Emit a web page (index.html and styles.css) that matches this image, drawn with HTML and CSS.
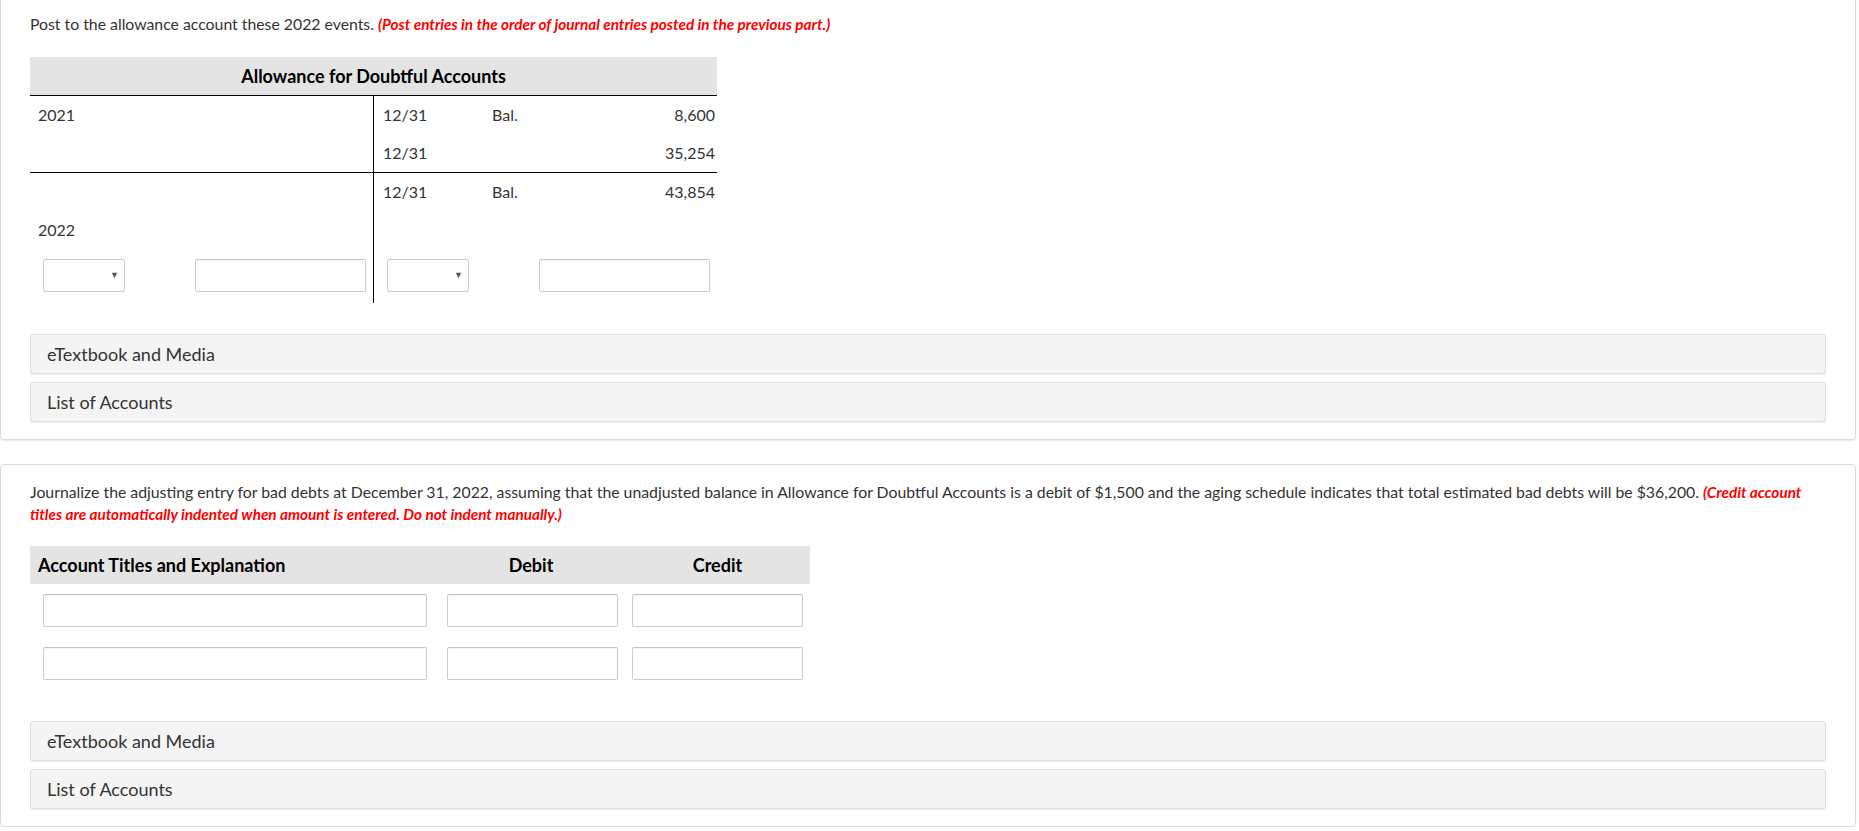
FILE: index.html
```html
<!DOCTYPE html>
<html lang="en">
<head>
    <meta charset="UTF-8">
    <meta name="viewport" content="width=device-width, initial-scale=1.0">
    <title>Allowance for Doubtful Accounts</title>
    <link rel="stylesheet" href="styles.css">
</head>
<body>
    <div class="card card-first">
        <p class="prompt">Post to the allowance account these 2022 events. <em class="note">(Post entries in the order of journal entries posted in the previous part.)</em></p>

        <table class="t-account">
            <colgroup>
                <col class="c-ldate">
                <col class="c-lamt">
                <col class="c-rdate">
                <col class="c-rexpl">
                <col class="c-ramt">
            </colgroup>
            <thead>
                <tr><th colspan="5">Allowance for Doubtful Accounts</th></tr>
            </thead>
            <tbody>
                <tr>
                    <td class="ldate">2021</td>
                    <td></td>
                    <td class="rdate">12/31</td>
                    <td class="expl">Bal.</td>
                    <td class="amt">8,600</td>
                </tr>
                <tr class="ruled">
                    <td class="ldate"></td>
                    <td></td>
                    <td class="rdate">12/31</td>
                    <td class="expl"></td>
                    <td class="amt">35,254</td>
                </tr>
                <tr>
                    <td class="ldate"></td>
                    <td></td>
                    <td class="rdate">12/31</td>
                    <td class="expl">Bal.</td>
                    <td class="amt">43,854</td>
                </tr>
                <tr>
                    <td class="ldate">2022</td>
                    <td></td>
                    <td class="rdate"></td>
                    <td class="expl"></td>
                    <td class="amt"></td>
                </tr>
                <tr class="entry">
                    <td class="ldate"><span class="select"><select><option></option></select></span></td>
                    <td class="lamt"><input type="text" class="field field-amt"></td>
                    <td class="rdate"><span class="select"><select><option></option></select></span></td>
                    <td class="expl"></td>
                    <td class="ramt"><input type="text" class="field field-amt"></td>
                </tr>
            </tbody>
        </table>

        <div class="links">
            <div class="link-bar">eTextbook and Media</div>
            <div class="link-bar">List of Accounts</div>
        </div>
    </div>

    <div class="card">
        <p class="prompt">Journalize the adjusting entry for bad debts at December 31, 2022, assuming that the unadjusted balance in Allowance for Doubtful Accounts is a debit of $1,500 and the aging schedule indicates that total estimated bad debts will be $36,200. <em class="note">(Credit account titles are automatically indented when amount is entered. Do not indent manually.)</em></p>

        <table class="journal">
            <colgroup>
                <col class="c-acct">
                <col class="c-debit">
                <col class="c-credit">
            </colgroup>
            <thead>
                <tr>
                    <th class="acct">Account Titles and Explanation</th>
                    <th>Debit</th>
                    <th>Credit</th>
                </tr>
            </thead>
            <tbody>
                <tr>
                    <td class="acct"><input type="text" class="field field-acct"></td>
                    <td class="debit"><input type="text" class="field field-amt"></td>
                    <td class="credit"><input type="text" class="field field-amt"></td>
                </tr>
                <tr>
                    <td class="acct"><input type="text" class="field field-acct"></td>
                    <td class="debit"><input type="text" class="field field-amt"></td>
                    <td class="credit"><input type="text" class="field field-amt"></td>
                </tr>
            </tbody>
        </table>

        <div class="links">
            <div class="link-bar">eTextbook and Media</div>
            <div class="link-bar">List of Accounts</div>
        </div>
    </div>
</body>
</html>
```

FILE: styles.css
```css
body {
    margin: 0;
    font-family: Lato, 'Open Sans', sans-serif;
    color: #333;
    background: #fff;
}

.card {
    margin: 24px 3px 0 0;
    padding: 16px 29px 17px;
    border: 1px solid #dcdcdc;
    border-radius: 4px;
    box-shadow: 0 1px 2px rgba(0, 0, 0, 0.1);
}

.card-first {
    margin-top: 0;
    padding-top: 13px;
    border-top: none;
    border-radius: 0 0 4px 4px;
}

.prompt {
    margin: 0;
    font-size: 15.8px;
    line-height: 22px;
}

.note {
    color: #f00;
    font-weight: 700;
    font-style: italic;
    font-size: 15.3px;
}

/* T-account */
.t-account {
    margin-top: 22px;
    width: 687px;
    table-layout: fixed;
    border-collapse: separate;
    border-spacing: 0;
    font-size: 16px;
}

.c-ldate { width: 155px; }
.c-lamt { width: 188px; }
.c-rdate { width: 110px; }
.c-rexpl { width: 47px; }
.c-ramt { width: 187px; }

.t-account th {
    background: #e4e4e4;
    color: #000;
    font-size: 18px;
    font-weight: 700;
    line-height: 20px;
    padding: 9px 0;
    border-bottom: 1px solid #000;
}

.t-account td {
    padding: 9px 0;
    line-height: 20px;
    vertical-align: middle;
    white-space: nowrap;
}

.t-account td.rdate {
    border-left: 1px solid #000;
    padding-left: 9px;
}

.t-account td.ldate { padding-left: 8px; }
.t-account td.expl { padding-left: 9px; }

.t-account td.amt {
    text-align: right;
    padding-right: 2px;
}

.t-account tr.ruled td {
    border-bottom: 1px solid #000;
}

.t-account tr.entry td {
    padding-top: 10px;
    padding-bottom: 11px;
}

.t-account tr.entry td.ldate { padding-left: 13px; }
.t-account tr.entry td.rdate { padding-left: 13px; }
.t-account td.lamt { padding-left: 10px; }
.t-account td.ramt { padding-left: 9px; }

/* inputs */
.field {
    display: block;
    box-sizing: border-box;
    height: 33px;
    margin: 0;
    padding: 4px 6px;
    border: 1px solid #ccc;
    border-top-color: #c4c4c4;
    border-radius: 2px;
    background: #fff;
    box-shadow: inset 0 1px 1px rgba(0, 0, 0, 0.05);
    font: 15px Lato, sans-serif;
}

.field-amt { width: 171px; }
.field-acct { width: 384px; }

.select {
    position: relative;
    display: block;
    width: 82px;
    height: 33px;
}

.select select {
    appearance: none;
    -webkit-appearance: none;
    box-sizing: border-box;
    width: 100%;
    height: 100%;
    margin: 0;
    border: 1px solid #ccc;
    border-radius: 2px;
    background: #fff;
    font: 15px Lato, sans-serif;
}

.select::after {
    content: '\25BC';
    position: absolute;
    right: 6px;
    top: 11px;
    font-size: 9px;
    line-height: 10px;
    color: #555;
    pointer-events: none;
}

/* journal */
.journal {
    margin-top: 21px;
    width: 780px;
    table-layout: fixed;
    border-collapse: separate;
    border-spacing: 0;
    font-size: 16px;
}

.c-acct { width: 407px; }
.c-debit { width: 188px; }
.c-credit { width: 185px; }

.journal th {
    background: #e4e4e4;
    color: #000;
    font-size: 18px;
    font-weight: 700;
    line-height: 20px;
    padding: 9px 0;
    text-align: center;
}

.journal th.acct {
    text-align: left;
    padding-left: 8px;
}

.journal td {
    padding: 10px 0;
}

.journal td.acct { padding-left: 13px; }
.journal td.debit { padding-left: 10px; }
.journal td.credit { padding-left: 7px; }

/* link bars */
.links {
    margin-top: 31px;
    display: flex;
    flex-direction: column;
    gap: 8px;
}

.link-bar {
    height: 38px;
    padding: 0 16px;
    line-height: 38px;
    font-size: 18px;
    color: #333;
    background: #f4f4f4;
    border: 1px solid #e0e0e0;
    border-radius: 3px;
    box-shadow: 0 1px 1px rgba(0, 0, 0, 0.08);
}
```
